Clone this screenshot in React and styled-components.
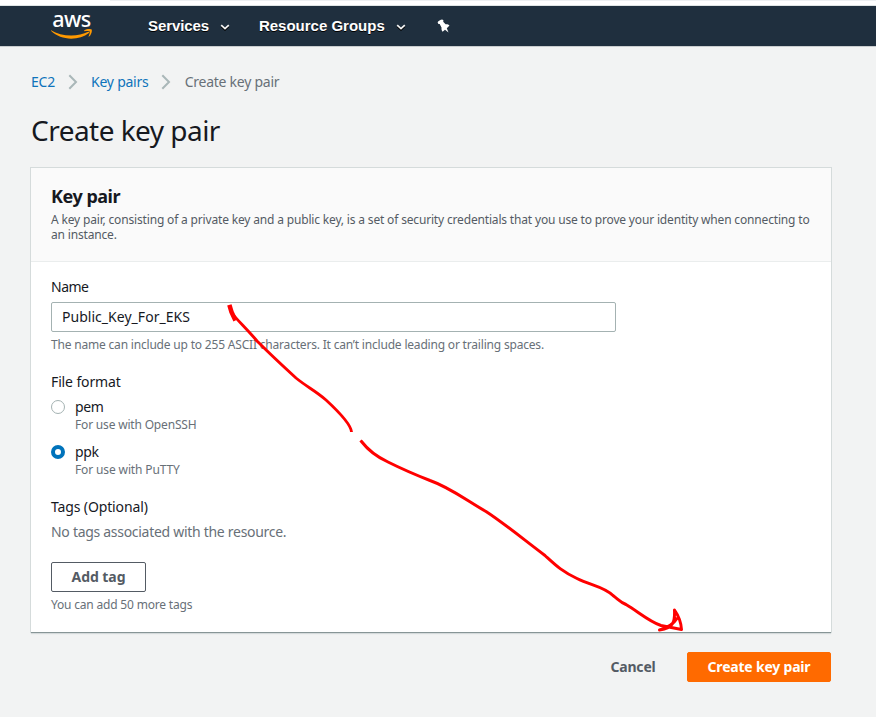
import React from "react";
import styled, { createGlobalStyle } from "styled-components";

const Global = createGlobalStyle`
  * { box-sizing: border-box; }
  body {
    margin: 0;
    background: #f2f3f3;
    color: #16191f;
    font-family: "Noto Sans", "Open Sans", sans-serif;
    font-size: 14px;
    line-height: 20px;
  }
  h1, h2, p { margin: 0; }
`;

const Page = styled.div`
  position: relative;
  width: 876px;
  height: 717px;
  overflow: hidden;
  background: #f2f3f3;
`;

const BrowserEdge = styled.div`
  height: 6px;
  padding-left: 110px;
  background: #fff;
  border-bottom: 1px solid #dfe5e5;
`;

const EdgeStrip = styled.div`
  height: 1px;
  background: #eceff1;
`;

const TopNav = styled.nav`
  display: flex;
  align-items: center;
  height: 41px;
  padding-left: 51px;
  background: #1f2f3e;
  border-bottom: 1px solid #c9cdcf;
`;

const NavItem = styled.div`
  display: flex;
  align-items: center;
  gap: 11px;
  margin-left: ${(p) => p.$gap}px;
  color: #fff;
  font: bold 15px/20px "Liberation Sans", Arial, sans-serif;
  letter-spacing: ${(p) => p.$tracking}px;
  text-shadow: 0 1px 0 #000;
`;

const CaretIcon = styled.svg`
  margin-top: 2px;
`;

const PinButton = styled.div`
  display: flex;
  margin-left: 31px;
`;

const Main = styled.main`
  width: 801px;
  margin-left: 31px;
`;

const Breadcrumbs = styled.nav`
  display: flex;
  align-items: center;
  height: 20px;
  margin-top: 25px;
`;

const Crumb = styled.span`
  color: ${(p) => (p.$link ? "#0f73bb" : "#687078")};
  letter-spacing: -0.25px;
`;

const CrumbArrow = styled.svg`
  margin: 0 13.2px 0 13px;
`;

const Title = styled.h1`
  margin-top: 20px;
  font-size: 28px;
  font-weight: 400;
  line-height: 36px;
  letter-spacing: -0.53px;
`;

const Card = styled.section`
  width: 800px;
  height: 464px;
  margin-top: 20px;
  background: #fff;
  box-shadow: 0 1px 0 0 #879596, 0 0 0 1px #d5dbdb, 0 2px 1px 0 #d5dadb;
`;

const CardHeader = styled.header`
  height: 94px;
  padding: 17px 20px 0;
  background: #fafafa;
  border-bottom: 1px solid #eaeded;
`;

const CardTitle = styled.h2`
  font-size: 18px;
  font-weight: 700;
  line-height: 22px;
  letter-spacing: -0.48px;
`;

const CardText = styled.p`
  margin-top: 5px;
  color: #545b64;
  font-size: 12px;
  line-height: 15px;
  letter-spacing: -0.168px;
`;

const CardBody = styled.div`
  padding: 15px 20px 0;
`;

const Field = styled.div`
  margin-bottom: ${(p) => p.$bottom}px;
`;

const Label = styled.div`
  height: 20px;
  letter-spacing: ${(p) => p.$tracking ?? -0.13}px;
`;

const TextInput = styled.input`
  display: block;
  width: 565px;
  height: 30px;
  margin: 5px 0;
  padding: 0 10px 2px;
  border: 1px solid #a4b2b2;
  border-radius: 2px;
  outline: none;
  background: #fff;
  color: #16191f;
  font: 14px/20px "Noto Sans", sans-serif;
  letter-spacing: 0.03px;
`;

const Hint = styled.div`
  height: 16px;
  color: #687078;
  font-size: 12px;
  line-height: 16px;
  letter-spacing: ${(p) => p.$tracking ?? -0.19}px;
`;

const Option = styled.label`
  display: flex;
  gap: 10px;
  height: 36px;
  margin-top: ${(p) => p.$top}px;
`;

const Radio = styled.span`
  width: 14px;
  height: 14px;
  margin-top: 3px;
  border: ${(p) => (p.$checked ? "4px solid #0073bb" : "1px solid #a4b2b2")};
  border-radius: 50%;
  background: #fff;
`;

const OptionText = styled.div`
  letter-spacing: -0.4px;
`;

const EmptyText = styled.p`
  margin-top: 5px;
  color: #687078;
  letter-spacing: -0.29px;
`;

const Button = styled.button`
  height: 30px;
  padding: 0;
  width: ${(p) => p.$width}px;
  border: 1px solid ${(p) => (p.$kind === "primary" ? "#ff6a00" : p.$kind === "link" ? "transparent" : "#545b64")};
  border-radius: 2px;
  background: ${(p) => (p.$kind === "primary" ? "#ff6a00" : p.$kind === "link" ? "transparent" : "#fff")};
  color: ${(p) => (p.$kind === "primary" ? "#fff" : "#545b64")};
  font: bold 14px/20px "Noto Sans", sans-serif;
  letter-spacing: ${(p) => p.$tracking}px;
`;

const AddTag = styled.div`
  margin: 20px 0 5px;
  height: 30px;
  display: flex;
`;

const Actions = styled.div`
  display: flex;
  justify-content: flex-end;
  gap: 11px;
  width: 800px;
  margin-top: 20px;
`;

const Annotation = styled.svg`
  position: absolute;
  inset: 0;
  pointer-events: none;
`;

const LogoBox = styled.div`
  display: flex;
  flex-direction: column;
  align-items: center;
  width: 41px;
  height: 33px;
`;

const LogoWord = styled.span`
  height: 19px;
  color: #fff;
  font: 500 21.5px/17px "Noto Sans", sans-serif;
  letter-spacing: -0.5px;
`;

const Logo = () => (
  <LogoBox>
    <LogoWord>aws</LogoWord>
    <svg width="41" height="11" viewBox="0 0 41 11">
      <path d="M0 1.200C10 7.800 27 8.100 37.200 2.800c.9-.5 1.600.5.700 1.200C28 12 9.500 11.600.2 2.100-.3 1.500-.2.900 0 1.200Z" fill="#ff9900" />
      <path d="M33.300 1.300C35.500-.2 39.800-.3 40.600.600c.8 1-.3 5.200-2.500 7-.4.300-.7.100-.5-.3.500-1.200 1.600-4 1-4.800-.6-.8-3.600-.5-5-.3-.4.100-.6-.5-.3-.900Z" fill="#ff9900" />
    </svg>
  </LogoBox>
);

const Caret = () => (
  <CaretIcon width="10" height="7" viewBox="0 0 10 7" fill="none">
    <path d="M1.200 2.500 5 6 8.800 2.500" stroke="#000" strokeWidth="1.500" />
    <path d="M1.200 1.200 5 4.700 8.800 1.200" stroke="#f4f4f4" strokeWidth="1.700" />
  </CaretIcon>
);

const Pin = () => (
  <svg width="13" height="14" viewBox="0 0 13 14" fill="#fff">
    <path d="M.6 3.300C1.500 1.700 3.400.500 5.300.400L6.500 1.500 6.200 2.800 8.600 5.300C9.900 4.900 11.500 5.400 12.500 6.500L9.800 9.200 11.500 13.500 8 10.700 5.600 12.700C4.600 11.300 4.200 9.900 4.600 8.700L2.700 5 1.400 4.900Z" />
  </svg>
);

const Separator = () => (
  <CrumbArrow width="10" height="16" viewBox="0 0 10 16" fill="none">
    <path d="M1.300 1.200 8 8 1.300 14.800" stroke="#aab7b8" strokeWidth="2" />
  </CrumbArrow>
);

export default function App() {
  return (
    <Page>
      <Global />
      <BrowserEdge><EdgeStrip /></BrowserEdge>
      <TopNav>
        <Logo />
        <NavItem $gap={56} $tracking={-0.1}>Services <Caret /></NavItem>
        <NavItem $gap={29} $tracking={0}>Resource Groups <Caret /></NavItem>
        <PinButton><Pin /></PinButton>
      </TopNav>
      <Main>
        <Breadcrumbs>
          <Crumb $link>EC2</Crumb>
          <Separator />
          <Crumb $link>Key pairs</Crumb>
          <Separator />
          <Crumb>Create key pair</Crumb>
        </Breadcrumbs>
        <Title>Create key pair</Title>
        <Card>
          <CardHeader>
            <CardTitle>Key pair</CardTitle>
            <CardText>
              A key pair, consisting of a private key and a public key, is a set of security credentials that you use to prove your identity when connecting to an instance.
            </CardText>
          </CardHeader>
          <CardBody>
            <Field $bottom={19}>
              <Label $tracking={-0.5}>Name</Label>
              <TextInput defaultValue="Public_Key_For_EKS" />
              <Hint>The name can include up to 255 ASCII characters. It can’t include leading or trailing spaces.</Hint>
            </Field>
            <Field $bottom={19}>
              <Label>File format</Label>
              <Option $top={5}>
                <Radio />
                <OptionText>pem<Hint $tracking={-0.18}>For use with OpenSSH</Hint></OptionText>
              </Option>
              <Option $top={9}>
                <Radio $checked />
                <OptionText>ppk<Hint $tracking={-0.13}>For use with PuTTY</Hint></OptionText>
              </Option>
            </Field>
            <Label>Tags (Optional)</Label>
            <EmptyText>No tags associated with the resource.</EmptyText>
            <AddTag><Button $width={95} $tracking={-0.05}>Add tag</Button></AddTag>
            <Hint>You can add 50 more tags</Hint>
          </CardBody>
        </Card>
        <Actions>
          <Button $kind="link" $width={86} $tracking={-0.2}>Cancel</Button>
          <Button $kind="primary" $width={144} $tracking={-0.2}>Create key pair</Button>
        </Actions>
      </Main>
      <Annotation width="876" height="717" viewBox="0 0 876 717" fill="none" stroke="#f00" strokeLinecap="square" strokeLinejoin="round">
        <path d="M230 307 231.500 312 234.500 318.500" strokeWidth="4.500" />
        <path d="M231 312C237 320 246 328 257 341C270 354 284 367 296 378C307 387 316 391 326 400C339 412 351 424 351.500 432" strokeWidth="2.900" strokeLinecap="butt" />
        <path d="M361.500 441.500C368 450 375 456 388 462C402 469 416 475 430 480.500C450 487.500 465 499.500 486 511.500C503 522.500 525 540.500 545 555.500C556 565.500 562 571.500 577 578.500C591 585.500 604 586.500 613 595.500C619 600 620 602 626 604.500C638 611.500 649 621.500 661 625.500L681.500 629.500C681 621 678 615 674.500 610C675 621 674 628 659.500 630C666 628 673 625 676.500 619" strokeWidth="3" />
      </Annotation>
    </Page>
  );
}
